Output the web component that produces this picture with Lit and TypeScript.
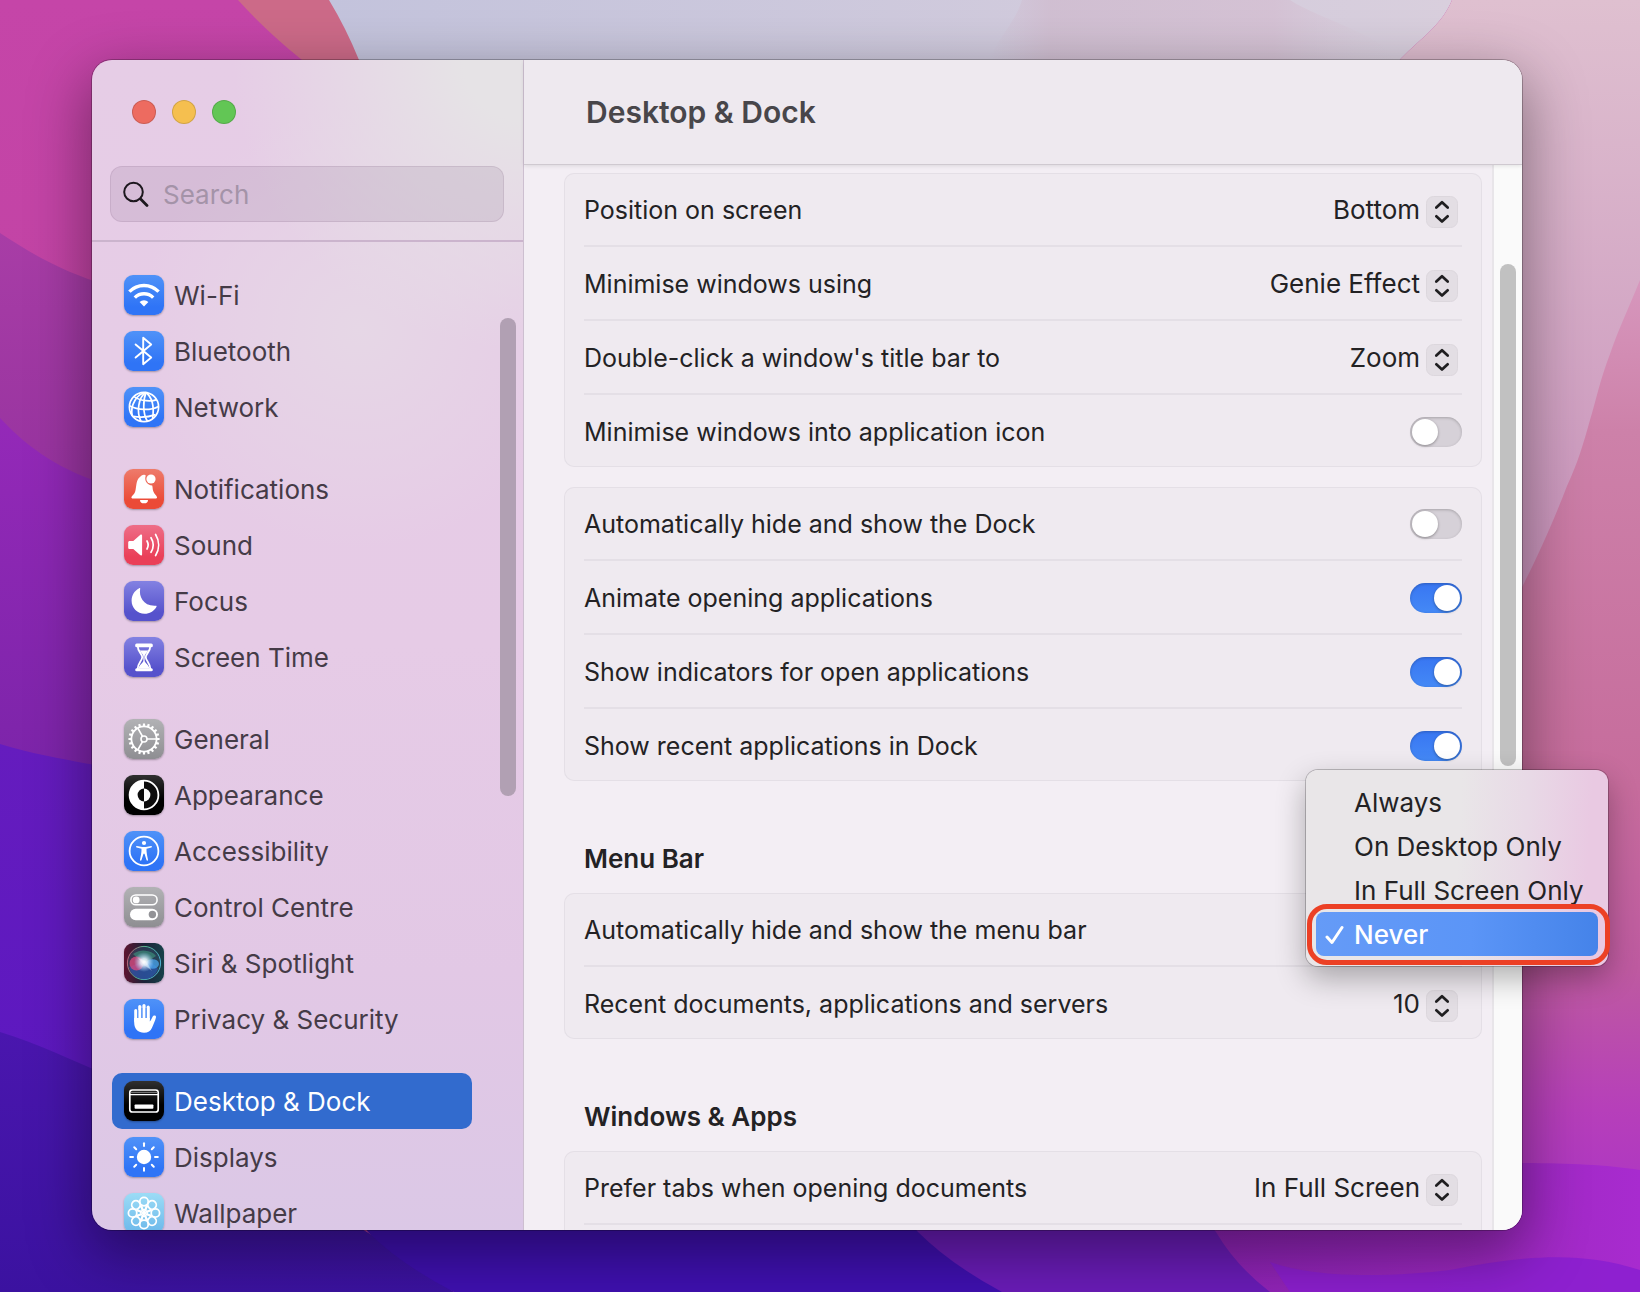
import { LitElement, html, css, svg, nothing, TemplateResult } from "lit";
import { customElement, property, state } from "lit/decorators.js";
import { classMap } from "lit/directives/class-map.js";

type Glyph = TemplateResult;

interface Place {
  label: string;
  tint: string;
  glyph: Glyph;
}

interface Setting {
  id: string;
  label: string;
  value?: string;
  on?: boolean;
}

const spokes = (count: number, draw: (angle: number) => TemplateResult) =>
  Array.from({ length: count }, (_, i) => draw((i * 360) / count));

const glyphs = {
  wifi: svg`<g fill="none" stroke="#fff" stroke-width="3.4">
      <path d="M5.400 16.600A20.400 20.400 0 0 1 34.600 16.600"/><path d="M10.800 22.600A13 13 0 0 1 29.200 22.600"/></g>
    <path fill="#fff" d="M20 31.400l-4.400-4.400a6.400 6.400 0 0 1 8.800 0z"/>`,
  bluetooth: svg`<path fill="none" stroke="#fff" stroke-width="1.9" stroke-linejoin="round" stroke-linecap="round"
      d="M11.6 13.4L27.2 26.6L19.2 33.2V6.8L27.2 13.4L11.6 26.6"/>`,
  globe: svg`<g fill="none" stroke="#fff" stroke-width="1.7"><circle cx="20" cy="20" r="14.6"/>
      <path d="M22 5.5C14 10 12.5 26 17 34.3"/><path d="M22 5.5C19 13 18.5 27 23.5 34.2"/>
      <path d="M22 5.5C29 11 30 22 28.6 31.6"/><path d="M22 5.5C13 6.5 6 18 8.2 28.6"/>
      <path d="M10 9.6C17 14.5 28 14.6 32.6 12.6"/><path d="M5.4 18.8C14 23.5 27 23.6 34.4 19.4"/>
      <path d="M9 29.4C16 30.6 25 30 31.6 27.6"/></g>`,
  bell: svg`<path fill="#fff" d="M7.4 28.6c0-2 2.6-2.6 3.8-6.2 1.300-4 .6-10.800 4.200-14 1.400-1.300 3-2.600 4.400-2.600
      1 0 1.400.3 2 .8a7 7 0 0 0 6.400 9.800c.6 2 .4 4.400 1.200 6.200 1.200 3 3.600 4 3.600 6 0 .6-.4.8-1 .8H8.200c-.5 0-.8-.3-.8-.8z"/>
    <circle cx="27" cy="10" r="4.600" fill="#fff"/><path fill="#fff" d="M16 30.900h8a4 3.400 0 0 1-8 0z"/>`,
  sound: svg`<path fill="#fff" d="M4.200 17.400c0-1 .6-1.500 1.500-1.500h3.600l6.800-6c1-.8 2-.4 2 .8v18.600c0 1.200-1 1.600-2 .8l-6.800-6H5.700
      c-.9 0-1.500-.5-1.500-1.500z"/><g fill="none" stroke="#fff" stroke-linecap="round" stroke-width="1.700">
      <path d="M23 16a8 8 0 0 1 0 8"/><path d="M27 12.700a14 14 0 0 1 0 14.600"/><path d="M31.600 9.500a20 20 0 0 1 0 21"/></g>`,
  moon: svg`<path fill="#fff" d="M16.200 7.600C14.600 15.600 19.500 25.600 31.800 24.800c.8 0 1 .5.6 1.200C30 30.200 25.600 32.800 20.600 32.800
      13.400 32.800 7.600 27 7.600 19.800 7.600 14.200 10.600 9.600 15.200 7.200c.7-.3 1.200-.2 1 .4z"/>`,
  hourglass: svg`<path fill="none" stroke="#fff" stroke-width="1.800" stroke-linejoin="round"
      d="M12.400 8H27.600M12.400 32.600H27.600M13.600 8.200c0 7 4.600 8.200 4.600 12s-4.600 5.600-4.600 12.200M26.400 8.200c0 7-4.600 8.200-4.600 12
      s4.600 5.600 4.600 12.200"/><rect x="11.200" y="6.400" width="17.600" height="3.800" rx="1.500" fill="#fff"/>
      <rect x="11.200" y="31.200" width="17.600" height="3" rx="1.500" fill="#fff"/>
      <path fill="#fff" d="M15.800 13.600h8.400c-1 2.200-3.600 3.600-3.600 6v4c0 2.400 4.400 4.400 4.800 8H14.600c.4-3.600 4.800-5.600 4.800-8v-4c0-2.400-2.600-3.800-3.600-6z"/>`,
  gear: svg`<g fill="none" stroke="#fff"><circle cx="20" cy="20" r="12.600" stroke-width="1.800"/>
      <circle cx="20" cy="20" r="3" stroke-width="1.600"/>
      <path stroke-width="1.700" d="M23 20H32.400M18.500 17.400L13.800 9.200M18.500 22.600L13.800 30.800"/>
      ${spokes(20, (a) => svg`<path stroke-width="2.200" d="M20 7.600V4.400" transform="rotate(${a} 20 20)"/>`)}</g>`,
  appearance: svg`<circle cx="20" cy="20" r="14.400" fill="#0c0c0c" stroke="#fff" stroke-width="1.800"/>
      <path fill="#fff" d="M20 5.600a14.400 14.400 0 0 0 0 28.800z"/><path fill="#0c0c0c" d="M20 13.600a6.400 6.400 0 0 0 0 12.800z"/>
      <path fill="#fff" d="M20 13.600a6.400 6.400 0 0 1 0 12.800z"/>`,
  accessibility: svg`<circle cx="20" cy="20" r="14.400" fill="none" stroke="#fff" stroke-width="1.800"/>
      <circle cx="20" cy="12" r="2.100" fill="#fff"/>
      <path fill="#fff" d="M12.900 15.100l5.300.8h3.600l5.300-.8c1-.1 1.200 1.100.3 1.400l-4.900 1.300c-.2 3.800.8 7.200 1.500 10.900.2 1-1.100 1.300-1.500.4
      l-2-6.300h-1l-2 6.300c-.4.900-1.700.6-1.500-.4.700-3.700 1.700-7.100 1.500-10.900l-4.900-1.300c-.9-.3-.7-1.500.3-1.400z"/>`,
  control: svg`<rect x="6.900" y="8" width="26.200" height="9.800" rx="4.900" fill="none" stroke="#fff" stroke-width="1.600"/>
      <circle cx="12.200" cy="12.900" r="3.400" fill="#fff"/><rect x="6" y="21.800" width="28" height="11.400" rx="5.700" fill="#fff"/>
      <circle cx="28.400" cy="27.500" r="3.700" fill="#929296"/>`,
  siri: svg`<defs><radialGradient id="core"><stop offset="0" stop-color="#fff"/><stop offset=".35" stop-color="#e8f4ff" stop-opacity=".85"/>
      <stop offset="1" stop-color="#9fd0ff" stop-opacity="0"/></radialGradient>
      <linearGradient id="ring" x2="1" y2=".3"><stop offset="0" stop-color="#d24a72"/><stop offset=".5" stop-color="#52b78f"/>
      <stop offset="1" stop-color="#4fb0d0"/></linearGradient></defs>
      <circle cx="20" cy="20" r="16.600" fill="#35506b" fill-opacity=".5" stroke="url(#ring)" stroke-width="1"/>
      <path d="M5 24a15 15 0 0 0 29 2 19 19 0 0 0-14-8z" fill="#2a5cc8" fill-opacity=".55"/>
      <path d="M9 11a15 12 0 0 1 23 2l-12 8z" fill="#3f9a80" fill-opacity=".6"/>
      <circle cx="12.500" cy="20.500" r="7" fill="#e0487f" fill-opacity=".75"/>
      <ellipse cx="28.500" cy="21" rx="6.500" ry="4.800" fill="#4aa6ee" fill-opacity=".75"/>
      <circle cx="20" cy="19" r="10" fill="url(#core)"/><path d="M14 15l8 3 6 10-8-6z" fill="#fff" fill-opacity=".35"/>`,
  hand: svg`<path fill="none" stroke="#fff" stroke-width="3.200" stroke-linecap="round" d="M11.800 22V11.600M15.800 20V7.600M20 20V6.600M24.200 20V8.200"/>
      <path fill="#fff" d="M10.200 19h15.600v3.600c1.200-.6 2.200-4.600 3.400-5.600 1-.8 3-.4 2.800 1.200-.8 3.400-2.600 7.400-4 10.600-1.400 3.200-4 5-8 5
      -5.600 0-9.800-3.400-9.800-10z"/><path stroke="#4287f7" stroke-width=".8" d="M13.800 11v8M17.900 9v10M22.100 9v10"/>`,
  dock: svg`<rect x="5.800" y="9" width="28.400" height="22" rx="2.600" fill="none" stroke="#fff" stroke-width="1.700"/>
      <path stroke="#fff" stroke-width="1.300" d="M6 13.600H34"/><path stroke="#999" stroke-width=".8" d="M6 11.400H34"/>
      <rect x="10.600" y="23.400" width="18.800" height="4.400" rx=".8" fill="#fff"/>`,
  sun: svg`<circle cx="20" cy="20" r="7.200" fill="#fff"/>
      ${spokes(8, (a) => svg`<path stroke="#fff" stroke-width="2" stroke-linecap="round" d="M20 9V6.200" transform="rotate(${a} 20 20)"/>`)}`,
  flower: svg`<g fill="none" stroke="#fff" stroke-width="1.800">
      ${spokes(8, (a) => svg`<g transform="rotate(${a} 20 20)"><circle cx="20" cy="8.600" r="4.200"/>
        <path d="M20 17.500C17.600 15.500 17.400 13.500 18 12.300M20 17.500C22.400 15.500 22.600 13.500 22 12.300"/></g>`)}
      </g><circle cx="20" cy="20" r="2.200" fill="#fff"/>`,
};

const places: Place[][] = [
  [
    { label: "Wi-Fi", tint: "blue", glyph: glyphs.wifi },
    { label: "Bluetooth", tint: "blue", glyph: glyphs.bluetooth },
    { label: "Network", tint: "blue", glyph: glyphs.globe },
  ],
  [
    { label: "Notifications", tint: "red", glyph: glyphs.bell },
    { label: "Sound", tint: "pink", glyph: glyphs.sound },
    { label: "Focus", tint: "indigo", glyph: glyphs.moon },
    { label: "Screen Time", tint: "indigo", glyph: glyphs.hourglass },
  ],
  [
    { label: "General", tint: "grey", glyph: glyphs.gear },
    { label: "Appearance", tint: "black", glyph: glyphs.appearance },
    { label: "Accessibility", tint: "blue", glyph: glyphs.accessibility },
    { label: "Control Centre", tint: "grey", glyph: glyphs.control },
    { label: "Siri & Spotlight", tint: "siri", glyph: glyphs.siri },
    { label: "Privacy & Security", tint: "blue", glyph: glyphs.hand },
  ],
  [
    { label: "Desktop & Dock", tint: "black", glyph: glyphs.dock },
    { label: "Displays", tint: "blue", glyph: glyphs.sun },
    { label: "Wallpaper", tint: "sky", glyph: glyphs.flower },
  ],
];

const sections: { title?: string; rows: Setting[] }[] = [
  {
    rows: [
      { id: "position", label: "Position on screen", value: "Bottom" },
      { id: "minimise", label: "Minimise windows using", value: "Genie Effect" },
      { id: "double", label: "Double-click a window's title bar to", value: "Zoom" },
      { id: "into", label: "Minimise windows into application icon", on: false },
    ],
  },
  {
    rows: [
      { id: "autohide", label: "Automatically hide and show the Dock", on: false },
      { id: "animate", label: "Animate opening applications", on: true },
      { id: "indicators", label: "Show indicators for open applications", on: true },
      { id: "recent", label: "Show recent applications in Dock", on: true },
    ],
  },
  {
    title: "Menu Bar",
    rows: [
      { id: "menubar", label: "Automatically hide and show the menu bar" },
      { id: "documents", label: "Recent documents, applications and servers", value: "10" },
    ],
  },
  {
    title: "Windows & Apps",
    rows: [
      { id: "tabs", label: "Prefer tabs when opening documents", value: "In Full Screen" },
      { id: "close", label: "" },
    ],
  },
];

@customElement("desk-wallpaper")
class DeskWallpaper extends LitElement {
  static styles = css`
    :host { display: block; }
    .art { display: block; width: 100%; height: 100%; }
  `;

  private fade(id: string, from: string, to: string, vertical = true) {
    return svg`<linearGradient id=${id} x2=${vertical ? 0 : 1} y2=${vertical ? 1 : 0}>
      <stop offset="0" stop-color=${from}/><stop offset="1" stop-color=${to}/></linearGradient>`;
  }

  render() {
    return html`<svg class="art" viewBox="0 0 1640 1292" preserveAspectRatio="none" aria-hidden="true">
      <defs>
        ${this.fade("magenta", "#c545a8", "#b93f9b")}
        ${this.fade("plum", "#a83da6", "#95329f")}
        ${this.fade("violet", "#9429b8", "#7a24a8")}
        ${this.fade("iris", "#651cbe", "#5c18c0")}
        ${this.fade("navy", "#4a16ae", "#3b12a0")}
        ${this.fade("mist", "#c3c3dc", "#d9cfdd", false)}
        ${this.fade("haze", "#dfc0d0", "#c88fba")}
        <linearGradient id="blush"><stop offset="0" stop-color="#d0bccf" stop-opacity="0"/>
          <stop offset=".15" stop-color="#d0bccf" stop-opacity=".8"/><stop offset=".7" stop-color="#d4bfd2" stop-opacity=".8"/>
          <stop offset="1" stop-color="#d8cad9" stop-opacity="0"/></linearGradient>
        <linearGradient id="rose" x2="0" y2="1">
          <stop offset="0" stop-color="#d797bd"/><stop offset=".15" stop-color="#cd81a9"/>
          <stop offset=".5" stop-color="#c66c9c"/><stop offset=".68" stop-color="#be5aa0"/>
          <stop offset=".82" stop-color="#b63fba"/><stop offset="1" stop-color="#a52ccc"/>
        </linearGradient>
        <linearGradient id="orchid"><stop offset="0" stop-color="#8c22b4"/>
          <stop offset=".65" stop-color="#9c28c0"/><stop offset="1" stop-color="#a82bcf"/></linearGradient>
      </defs>
      <rect width="1640" height="1292" fill="url(#magenta)"/>
      <path fill="#cc6a88" d="M238 0H340L400 140H390Q330 90 302 60Q265 30 238 0Z"/>
      <path fill="url(#mist)" d="M329 0H1452C1440 30 1410 45 1395 66V160H400L359 60Q346 28 329 0Z"/>
      <path fill="url(#blush)" d="M1022 0C1015 25 990 45 990 66H1395C1400 40 1320 20 1290 0Z"/>
      <path fill="url(#haze)" d="M1452 0H1640V640H1395V66C1410 45 1440 30 1452 0Z"/>
      <path fill="url(#rose)" d="M1640 280C1628 310 1618 330 1610 354C1600 380 1596 400 1590 420C1583 445 1578 462 1567 486C1553 522 1540 552 1522 587L1400 760V1292H1640Z"/>
      <path fill="url(#plum)" d="M0 233C32 254 62 272 110 286V520H0Z"/>
      <path fill="url(#violet)" d="M0 418C30 450 60 470 110 486V800H0Z"/>
      <path fill="url(#iris)" d="M0 744C40 756 70 760 110 768V1100H0Z"/>
      <path fill="url(#navy)" d="M0 1032C40 1044 70 1060 110 1076L380 1240L454 1292H0Z"/>
      <path fill="#3f10b0" d="M340 1190L368 1232Q400 1264 454 1292H1010L900 1190Z"/>
      <path fill="#6a1cb8" d="M880 1190L918 1232Q950 1264 1002 1292H1290L1210 1190Z"/>
      <path fill="url(#orchid)" d="M1180 1190L1216 1232Q1236 1266 1270 1292H1640V1170C1600 1164 1560 1163 1500 1163Z"/>
      <path fill="#8a1fd0" fill-opacity=".85" d="M1270 1262C1320 1280 1400 1276 1450 1270C1520 1256 1580 1250 1640 1270V1292H1290Z"/>
    </svg>`;
  }
}

@customElement("settings-sidebar")
class SettingsSidebar extends LitElement {
  @property() current = "";

  static styles = css`
    :host {
      display: flex;
      flex-direction: column;
      min-height: 0;
      position: relative;
      border-right: 1px solid #cdbfd0;
      background:
        radial-gradient(circle at 100% 0, #e6e3e6 60px, transparent 290px),
        radial-gradient(circle at 62% 23%, #e6d7e6, transparent 220px),
        linear-gradient(#e6cde6, #e6cbe6 50%, #e2c8e5 78%, #dbc8e6);
    }
    .lights { display: flex; gap: 16px; padding: 40px 40px 0; }
    .light {
      width: 24px; height: 24px; padding: 0; border-radius: 50%;
      border: 1px solid rgba(0, 0, 0, 0.14);
    }
    .close { background: #ed6b60; }
    .shrink { background: #f5bf4f; }
    .grow { background: #62c655; }
    .search {
      display: flex; align-items: center; gap: 14px;
      margin: 42px 19px 18px 18px; height: 56px; padding: 0 12px; box-sizing: border-box;
      border: 1px solid rgba(80, 40, 80, 0.1); border-radius: 12px;
      background: rgba(90, 60, 100, 0.11);
    }
    .lens { width: 26px; height: 26px; flex: none; }
    .query {
      flex: 1; min-width: 0; border: 0; padding: 2px 0 0; background: none; outline: none;
      font: inherit; color: #231f25;
    }
    .query::placeholder { color: #a493a8; opacity: 1; }
    .list {
      flex: 1; min-height: 0; overflow: hidden;
      border-top: 2px solid #cbb4cd;
      padding: 25px 51px 0 20px;
    }
    .group { list-style: none; margin: 0 0 26px; padding: 0; }
    .place {
      display: flex; align-items: center; gap: 10px; height: 56px; padding: 0 12px;
      border-radius: 10px; text-decoration: none; color: #453b47;
    }
    .name { padding-top: 2px; }
    .place.selected { background: #326bce; color: #fff; }
    .tile { width: 40px; height: 40px; flex: none; border-radius: 9px; box-shadow: 0 1px 2px rgba(0, 0, 0, 0.3); overflow: hidden; }
    .blue { background: linear-gradient(#4f92f8, #2f74f6 80%); }
    .red { background: linear-gradient(#ee7b6b, #eb4a37 80%); }
    .pink { background: linear-gradient(#ee6e88, #ea3f58 80%); }
    .indigo { background: linear-gradient(#8382e2, #5652cc 80%); }
    .grey { background: linear-gradient(#b2b2b5, #8e8e92); }
    .black { background: linear-gradient(#303030, #000 60%); }
    .siri { background: linear-gradient(90deg, #5e1430, #1c2238 50%, #17414a); }
    .sky { background: linear-gradient(#9cdcf6, #6cb8ea); }
    .thumb {
      position: absolute; right: 7px; top: 258px; width: 16px; height: 478px;
      border-radius: 8px; background: #b1a0b3;
    }
  `;

  render() {
    return html`
      <div class="lights">
        <button class="light close" aria-label="Close"></button>
        <button class="light shrink" aria-label="Minimise"></button>
        <button class="light grow" aria-label="Zoom"></button>
      </div>
      <label class="search">
        <svg class="lens" viewBox="0 0 26 26" aria-hidden="true">
          <g fill="none" stroke="#1d181e" stroke-linecap="round">
            <circle cx="10.500" cy="11" r="9.300" stroke-width="2"/><path d="M17.600 18.100L24 24.500" stroke-width="2.800"/>
          </g>
        </svg>
        <input class="query" type="text" placeholder="Search" aria-label="Search">
      </label>
      <nav class="list">
        ${places.map((group) => html`<ul class="group">
          ${group.map((p) => html`<li>
            <a href="#" class=${classMap({ place: true, selected: p.label === this.current })}>
              <svg class="tile ${p.tint}" viewBox="0 0 40 40" aria-hidden="true">${p.glyph}</svg>
              <span class="name">${p.label}</span>
            </a></li>`)}
        </ul>`)}
      </nav>
      <div class="thumb"></div>`;
  }
}

@customElement("settings-pane")
class SettingsPane extends LitElement {
  @property() heading = "";

  static styles = css`
    :host { display: flex; flex-direction: column; min-width: 0; min-height: 0; background: #f3eef4; }
    .bar {
      display: flex; align-items: center; height: 104px; padding: 0 62px;
      box-sizing: border-box; background: #eee9ef; z-index: 1;
      box-shadow: 0 1px 0 #cfc9d0, 0 2px 4px rgba(0, 0, 0, 0.1);
    }
    .title { margin: 0; font-size: 30px; line-height: 36px; font-weight: 600; color: #48464a; }
    .body { flex: 1; min-height: 0; display: flex; overflow: hidden; }
    .scroll { flex: 1; min-width: 0; padding: 9px 10px 0 40px; overflow: hidden; }
    .track {
      width: 30px; flex: none; border-left: 2px solid #e8e5e9; box-sizing: border-box;
      background: #fafafa; padding: 100px 6px 0;
    }
    .thumb { width: 16px; height: 502px; border-radius: 8px; background: #c1c1c1; }
    .subtitle { margin: 0; padding: 60px 20px 17px; font-size: 26px; line-height: 35px; font-weight: 600; color: #232224; }
    .card {
      margin-bottom: 20px; padding: 0 20px; border-radius: 10px; background: #efeaf0;
      box-shadow: inset 0 0 0 1px #e4dfe6;
    }
    .titled { margin-bottom: 0; }
    .row { display: flex; align-items: center; justify-content: space-between; height: 70px; padding-top: 2px; }
    .row + .row { border-top: 2px solid #e4dfe6; }
    .name { font-size: 25px; }
    .choice { display: grid; align-items: center; justify-items: end; padding: 4px 4px 0 0; }
    .menu, .stepper { grid-area: 1 / 1; }
    .menu {
      appearance: none; border: 0; background: none; font: inherit; color: inherit;
      margin: 0; padding: 0 38px 4px 0; field-sizing: content; height: 36px; outline: none;
    }
    .stepper { width: 32px; height: 32px; pointer-events: none; }
    .switch {
      appearance: none; position: relative; width: 52px; height: 30px; margin: 0; border-radius: 15px;
      background: #d6d1d8; box-shadow: inset 0 1px 3px rgba(0, 0, 0, 0.22);
    }
    .switch::before {
      content: ""; position: absolute; top: 2px; left: 2px; width: 26px; height: 26px;
      border-radius: 50%; background: #fff; box-shadow: 0 1px 3px rgba(0, 0, 0, 0.35);
    }
    .switch:checked { background: linear-gradient(#3876f2, #4489f6); }
    .switch:checked::before { left: 24px; }
  `;

  private control(row: Setting) {
    if (row.value !== undefined) {
      return html`<span class="choice">
        <select class="menu" id=${row.id}><option>${row.value}</option></select>
        <svg class="stepper" viewBox="0 0 32 32" aria-hidden="true">
          <rect x=".5" y=".5" width="31" height="31" rx="7" fill="#e3dee4" stroke="#dcd7dd"/>
          <path d="M10.300 11.500L16 6.200L21.700 11.500M10.300 20.300L16 25.600L21.700 20.300" fill="none" stroke="#1f1e20"
            stroke-width="2.700" stroke-linecap="round" stroke-linejoin="round"/>
        </svg></span>`;
    }
    if (row.on !== undefined) {
      return html`<input class="switch" type="checkbox" role="switch" id=${row.id} .checked=${row.on}>`;
    }
    return nothing;
  }

  render() {
    return html`
      <header class="bar"><h1 class="title">${this.heading}</h1></header>
      <div class="body">
        <div class="scroll">
          ${sections.map((s, i) => html`
            ${s.title ? html`<h2 class="subtitle">${s.title}</h2>` : nothing}
            <div class=${classMap({ card: true, titled: i > 0 })}>
              ${s.rows.map((r) => html`<div class="row">
                ${r.label ? html`<label class="name" for=${r.id}>${r.label}</label>` : nothing}${this.control(r)}
              </div>`)}
            </div>`)}
        </div>
        <div class="track"><div class="thumb"></div></div>
      </div>`;
  }
}

@customElement("popup-menu")
class PopupMenu extends LitElement {
  @property({ attribute: false }) options: string[] = [];
  @state() private chosen = "Never";

  static styles = css`
    :host {
      display: block; box-sizing: border-box; width: 302px; padding: 10px;
      border-radius: 12px; color: #232224;
      background: linear-gradient(93deg, #e9e6e8 50%, #e8d9e6 72%, #e9c9e2 92%);
      box-shadow: 0 0 0 1px rgba(0, 0, 0, 0.22), 0 12px 30px rgba(0, 0, 0, 0.3);
    }
    .list { display: grid; }
    .item {
      display: flex; align-items: center; height: 44px; padding: 2px 0 0 9px; gap: 10px;
      border: 0; border-radius: 8px; background: none; font: inherit; color: inherit; text-align: left;
      white-space: nowrap;
    }
    .tick { width: 19px; height: 20px; flex: none; }
    .item.chosen { background: linear-gradient(90deg, #659bf7, #5b95f7 55%, #4583e9); color: #fff; font-weight: 500; }
    .frame {
      position: absolute; left: 1px; right: -2px; bottom: 1px; height: 61px; box-sizing: border-box;
      border: 5px solid #ec4025; border-radius: 20px; pointer-events: none;
    }
  `;

  render() {
    return html`<div class="list" role="menu">
        ${this.options.map((o) => html`<button role="menuitemradio" aria-checked=${o === this.chosen}
          class=${classMap({ item: true, chosen: o === this.chosen })} @click=${() => (this.chosen = o)}>
          <svg class="tick" viewBox="0 0 19 20" aria-hidden="true">
            ${o === this.chosen ? svg`<path d="M2 12L7 17.500L17 2.500" fill="none" stroke="#fff" stroke-width="3"
              stroke-linecap="round" stroke-linejoin="round"/>` : nothing}
          </svg>${o}</button>`)}
      </div>
      <div class="frame"></div>`;
  }
}

@customElement("app-root")
class AppRoot extends LitElement {
  static styles = css`
    :host {
      display: grid; height: 100vh; min-height: 900px; box-sizing: border-box;
      padding: 60px 118px 62px 92px; position: relative; overflow: hidden;
      font-family: Inter, "Liberation Sans", sans-serif; font-size: 26px; line-height: 32px; color: #232224;
    }
    .wall { position: absolute; inset: 0; }
    .stage { position: relative; display: grid; min-height: 0; }
    .window {
      display: grid; grid-template-columns: 432px minmax(0, 1fr); grid-template-rows: minmax(0, 1fr);
      min-height: 0; border-radius: 20px; overflow: hidden;
      box-shadow: 0 0 0 1px rgba(0, 0, 0, 0.25), 0 20px 60px 4px rgba(0, 0, 0, 0.4);
    }
    .popup { position: absolute; top: 710px; right: -86px; }
  `;

  render() {
    return html`
      <desk-wallpaper class="wall"></desk-wallpaper>
      <main class="stage">
        <div class="window">
          <settings-sidebar current="Desktop & Dock"></settings-sidebar>
          <settings-pane heading="Desktop & Dock"></settings-pane>
        </div>
        <popup-menu class="popup" .options=${["Always", "On Desktop Only", "In Full Screen Only", "Never"]}></popup-menu>
      </main>`;
  }
}
